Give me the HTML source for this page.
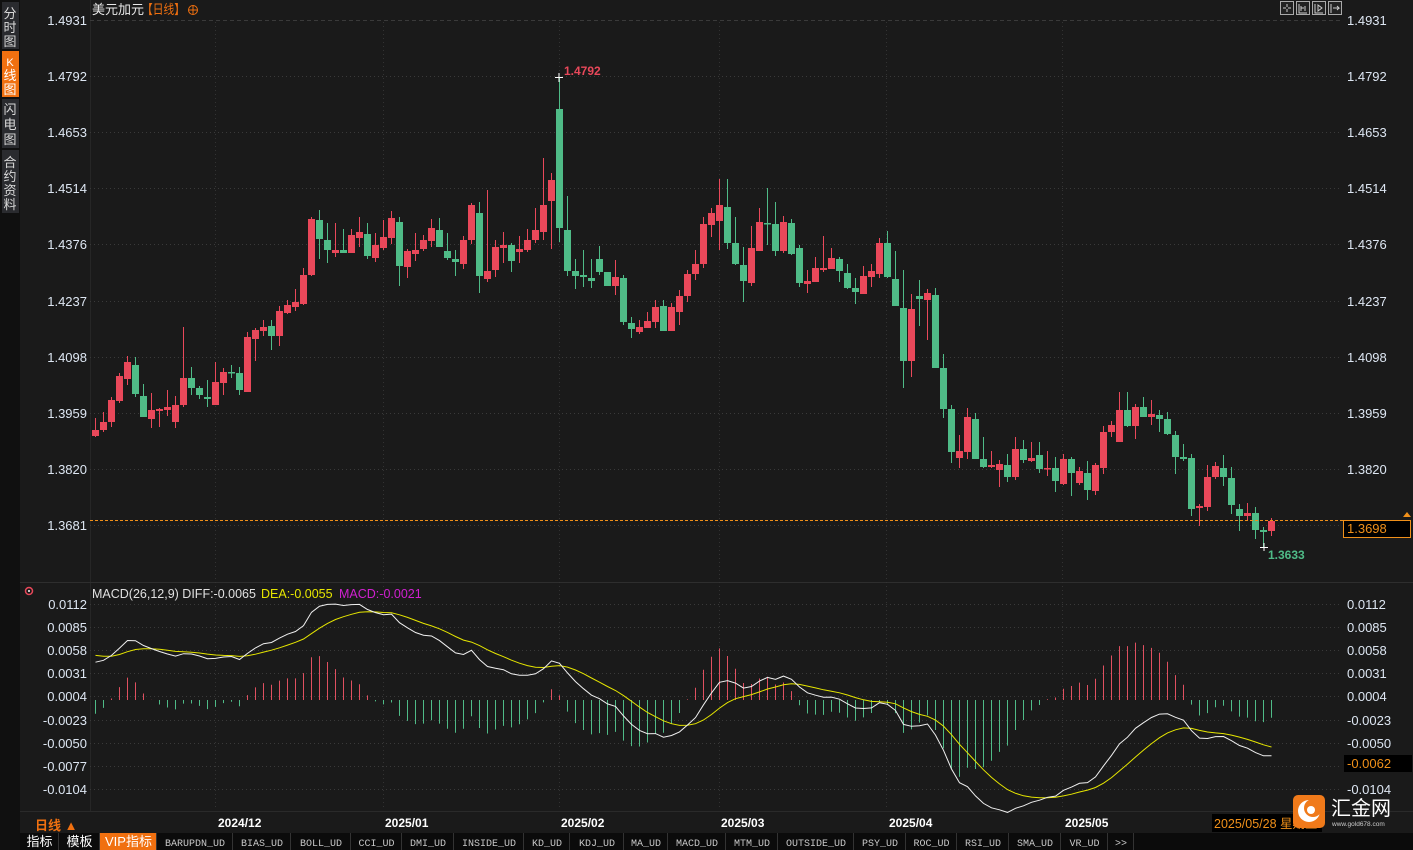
<!DOCTYPE html>
<html><head><meta charset="utf-8">
<style>
html,body{margin:0;padding:0;background:#1a1a1a;width:1413px;height:850px;overflow:hidden;font-family:"Liberation Sans","Noto Sans CJK SC",sans-serif}
svg{position:absolute;left:0;top:0}
</style></head>
<body>
<svg id="s" width="1413" height="850" xmlns="http://www.w3.org/2000/svg" font-family="Liberation Sans, Noto Sans CJK SC, sans-serif">
<rect x="0" y="0" width="1413" height="850" fill="#1a1a1a"/>
<rect x="0" y="0" width="20" height="850" fill="#101010"/>
<rect x="2" y="2" width="17" height="47" fill="#2a2b2f"/>
<rect x="2" y="51" width="17" height="46" fill="#f07010"/>
<rect x="2" y="99" width="17" height="49" fill="#2a2b2f"/>
<rect x="2" y="150" width="17" height="63" fill="#2a2b2f"/>
<g font-size="13" fill="#d8d8d8" text-anchor="middle">
<text x="10" y="18">分</text><text x="10" y="32">时</text><text x="10" y="46">图</text>
<text x="10" y="66" fill="#fff" font-size="11">K</text><text x="10" y="80" fill="#fff">线</text><text x="10" y="94" fill="#fff">图</text>
<text x="10" y="114">闪</text><text x="10" y="129">电</text><text x="10" y="144">图</text>
<text x="10" y="167">合</text><text x="10" y="181">约</text><text x="10" y="195">资</text><text x="10" y="209">料</text>
</g>
<line x1="90.5" y1="0" x2="90.5" y2="812" stroke="#262626"/>
<line x1="20" y1="582.5" x2="1413" y2="582.5" stroke="#2e2e2e"/>
<line x1="20" y1="811.5" x2="1413" y2="811.5" stroke="#2a2a2a"/>
<g id="grid" stroke="#3a3a3a" stroke-dasharray="1,3"></g>
<line x1="90" y1="20.5" x2="1340" y2="20.5" stroke="#3a3a3a" stroke-dasharray="4,3"/>
<g id="vgrid" stroke="#333" stroke-dasharray="1,3"></g>
<g id="candles"></g>
<g id="macd"></g>
<text x="92" y="14" font-size="13" fill="#e8e8e8">美元加元</text>
<text x="142" y="14" font-size="13" fill="#f07010" textLength="43" lengthAdjust="spacingAndGlyphs">【日线】</text>
<circle cx="193" cy="10" r="4.5" fill="none" stroke="#f07010"/><line x1="188.5" y1="10" x2="197.5" y2="10" stroke="#f07010"/><line x1="193" y1="5.5" x2="193" y2="14.5" stroke="#f07010"/>
<g fill="#222" stroke="#aaa">
<rect x="1280.5" y="1.5" width="13" height="13"/><rect x="1296.5" y="1.5" width="13" height="13"/><rect x="1312.5" y="1.5" width="13" height="13"/><rect x="1328.5" y="1.5" width="13" height="13"/>
</g>
<g stroke="#ccc" fill="none">
<path d="M1287 4v3M1287 9v3M1283 8h3M1288 8h3"/>
<path d="M1299 4v9h8M1301 6v5M1305 6v5M1301 8l3 0"/>
<path d="M1315 4v9h8M1318 5l4 3l-4 3z"/>
<path d="M1331 4v9M1333 8h6l-2-2M1337 10l2-2"/>
</g>
<g id="labels" font-size="13" fill="#dde6f2"></g>
<text x="564" y="75" font-size="12" fill="#e8485a" font-weight="bold">1.4792</text>
<path d="M555 77.5h8M559 73v9" stroke="#fff"/>
<text x="1268" y="559" font-size="12" fill="#4fbb87" font-weight="bold">1.3633</text>
<path d="M1260 547.5h8M1264 543v8" stroke="#fff"/>
<line x1="90" y1="520.5" x2="1402" y2="520.5" stroke="#f0901a" stroke-dasharray="3,2"/>
<path d="M1403 517l4-5l4 5z" fill="#f0901a"/>
<rect x="1343.5" y="520.5" width="67" height="17" fill="#000" stroke="#f0901a"/>
<text x="1347" y="533" font-size="13" fill="#f0901a">1.3698</text>
<circle cx="29" cy="591" r="3.5" fill="none" stroke="#e8485a" stroke-width="1.5"/><circle cx="29" cy="591" r="1" fill="#fff"/>
<text x="92" y="598" font-size="12.5" fill="#e0e0e0">MACD(26,12,9) DIFF:-0.0065 <tspan x="261" fill="#e6e600">DEA:-0.0055</tspan><tspan x="339" fill="#d020d0">MACD:-0.0021</tspan></text>
<rect x="1344" y="755" width="68" height="17" fill="#000"/>
<text x="1347" y="768" font-size="13" fill="#f0901a">-0.0062</text>
<text x="35" y="830" font-size="13" fill="#f07010" font-weight="bold">日线 ▲</text>
<g font-size="12" fill="#fff" font-weight="bold">
<text x="218" y="827">2024/12</text><text x="385" y="827">2025/01</text><text x="561" y="827">2025/02</text>
<text x="721" y="827">2025/03</text><text x="889" y="827">2025/04</text><text x="1065" y="827">2025/05</text>
</g>
<rect x="1212" y="814" width="110" height="18" fill="#000"/>
<text x="1214" y="828" font-size="12.5" fill="#f0901a">2025/05/28 星期三</text>
<rect x="1293" y="795" width="32" height="33" rx="5" fill="#f07a1a"/>
<circle cx="1309" cy="811" r="11" fill="#fff"/>
<circle cx="1313" cy="808" r="9" fill="#f07a1a"/>
<circle cx="1311" cy="810" r="4" fill="#fff"/>
<text x="1331" y="815" font-size="20" fill="#fff">汇金网</text>
<text x="1332" y="826" font-size="6.5" fill="#ccc">www.gold678.com</text>
<rect x="20" y="833" width="1393" height="17" fill="#0b0b0b"/>
<g id="tabs"></g>
</svg>
<script>
(function(){
var NS="http://www.w3.org/2000/svg";
function el(p,t,a,txt){var e=document.createElementNS(NS,t);for(var k in a)e.setAttribute(k,a[k]);if(txt!=null)e.textContent=txt;p.appendChild(e);return e;}
var g=document.getElementById('grid'),lab=document.getElementById('labels');
var mainY=[[1.4931,20],[1.4792,76],[1.4653,132],[1.4514,188],[1.4376,244],[1.4237,301],[1.4098,357],[1.3959,413],[1.3820,469],[1.3681,525]];
mainY.forEach(function(a,i){if(i>0)el(g,'line',{x1:90,y1:a[1]+.5,x2:1340,y2:a[1]+.5});
 el(lab,'text',{x:87,y:a[1]+5,'text-anchor':'end'},a[0].toFixed(4));
 if(i<9)el(lab,'text',{x:1347,y:a[1]+5},a[0].toFixed(4));});
var mY=[['0.0112',604],['0.0085',627],['0.0058',650],['0.0031',673],['0.0004',696],['-0.0023',720],['-0.0050',743],['-0.0077',766],['-0.0104',789]];
mY.forEach(function(a){el(g,'line',{x1:90,y1:a[1]+.5,x2:1340,y2:a[1]+.5});
 el(lab,'text',{x:87,y:a[1]+5,'text-anchor':'end'},a[0]);
 if(a[0]!='-0.0077')el(lab,'text',{x:1347,y:a[1]+5},a[0]);});
var vg=document.getElementById('vgrid');
[215,383,559,719,886,1062].forEach(function(x){el(vg,'line',{x1:x+.5,y1:22,x2:x+.5,y2:810});});
var D="r 430 436 418 437|r 422 430 412 432|r 400 422 397 427|r 376 401 373 403|r 362 379 356 385|g 365 394 357 397|g 396 417 384 417|r 410 419 393 428|r 409 411 408 427|r 407 410 390 416|r 405 422 396 428|r 378 405 327 407|g 378 388 367 395|g 388 395 386 399|g 397 399 380 407|r 382 405 362 405|r 372 383 368 395|g 372 373 365 378|g 373 390 367 395|r 337 392 332 392|r 330 339 328 361|r 327 331 320 336|g 326 336 320 350|r 311 336 306 346|r 305 313 300 314|r 302 307 289 311|r 275 304 268 305|r 219 275 217 276|g 220 239 210 259|g 240 250 223 263|r 250 253 223 257|g 250 253 229 253|r 235 253 229 253|r 232 238 217 247|g 234 256 223 259|r 245 258 233 262|r 237 248 220 250|r 218 238 211 244|g 222 266 217 286|r 251 267 249 278|r 250 254 233 261|r 240 249 235 251|r 228 241 219 247|g 230 247 218 247|g 251 258 233 260|g 259 262 250 276|r 240 264 236 269|r 205 240 203 244|g 213 276 202 293|r 271 279 190 282|r 247 270 240 277|r 245 248 232 263|g 245 261 243 272|r 249 252 236 263|r 240 250 229 252|r 230 240 208 243|r 205 232 158 240|r 180 201 173 249|g 109 228 77 242|g 230 271 196 276|g 271 276 259 289|g 275 277 250 287|g 278 281 259 288|g 259 272 246 275|g 272 286 272 286|r 277 286 260 295|g 278 322 275 325|g 323 329 317 338|r 327 332 320 334|r 321 328 312 328|r 307 322 300 328|g 306 331 300 331|r 307 331 303 331|r 296 312 290 325|r 274 296 270 302|r 264 274 250 280|r 224 264 217 268|r 213 225 208 237|r 205 221 179 250|g 207 243 179 249|g 243 264 217 265|g 265 281 247 302|r 248 283 226 286|r 222 251 208 251|g 223 224 188 245|g 224 251 202 256|r 222 251 216 253|g 223 254 219 255|g 248 283 245 287|r 281 284 270 293|r 268 282 257 282|r 268 270 236 272|r 258 269 248 269|g 259 271 257 282|g 273 288 264 289|g 288 292 278 304|r 276 294 266 294|r 271 277 264 287|r 243 274 238 278|g 243 277 231 278|g 279 306 251 306|g 308 361 270 388|r 309 361 294 377|g 296 299 280 326|r 293 300 289 340|g 295 368 288 368|g 368 409 354 418|g 409 452 405 463|r 451 458 435 468|r 417 452 408 459|g 419 459 413 459|g 459 467 437 468|r 465 467 451 468|r 464 470 460 487|g 465 477 454 482|r 449 477 437 480|g 449 460 440 463|r 458 461 442 462|g 455 469 442 473|r 468 469 451 476|g 468 481 457 492|r 459 484 454 485|g 459 473 457 496|r 471 483 467 485|g 473 490 461 500|r 465 491 463 495|r 432 468 426 474|r 425 432 421 437|r 410 442 392 442|g 410 426 392 427|r 407 426 404 439|g 407 417 397 417|r 414 417 400 425|g 415 419 410 432|g 419 434 412 435|g 435 457 431 474|g 457 459 444 461|g 458 509 454 516|r 506 508 504 526|r 477 507 465 511|r 466 477 462 479|g 468 477 455 486|g 478 505 467 514|g 509 516 504 531|r 513 516 503 520|g 513 530 507 539|g 530 532 527 547|r 521 531 518 536";
var RC="#e9485a",GC="#4fbb87";
var cg=document.getElementById('candles'),mg=document.getElementById('macd');
var closes=[];
D.split('|').forEach(function(s,i){var a=s.split(' ');var c=a[0]=='r'?RC:GC;var t=+a[1],b=+a[2],wt=+a[3],wb=+a[4];
 var x=95+8*i;
 el(cg,'rect',{x:x,y:wt,width:1,height:Math.max(1,wb-wt),fill:c});
 el(cg,'rect',{x:x-3,y:t,width:7,height:Math.max(1.5,b-t),fill:c});
 var cy=a[0]=='r'?t:b; closes.push(1.4931-(cy-20)*0.0139/56.15);});
var e12=closes[0]-0.0050,e26=closes[0]-0.0094,dea=0.0052;
var k12=2/13,k26=2/27,k9=2/10;
var dp=[],ep=[];
function Y(v){return 700-v*8583;}
closes.forEach(function(c,i){
 if(i>0){e12=e12+(c-e12)*k12;e26=e26+(c-e26)*k26;}
 var diff=e12-e26; if(i>0)dea=dea+(diff-dea)*k9;
 var h=2*(diff-dea); var x=95+8*i+.5;
 el(mg,'line',{x1:x,y1:700,x2:x,y2:Y(h),stroke:h>=0?'#e05060':'#4fbb87','stroke-width':1});
 dp.push(x+','+Y(diff).toFixed(1));ep.push(x+','+Y(dea).toFixed(1));});
el(mg,'polyline',{points:ep.join(' '),fill:'none',stroke:'#e6e600','stroke-width':1});
el(mg,'polyline',{points:dp.join(' '),fill:'none',stroke:'#f0f0f0','stroke-width':1});
var tg=document.getElementById('tabs');
var tabs=[['指标',20,59],['模板',59,100],['VIP指标',100,157],['BARUPDN_UD',157,233],['BIAS_UD',233,291],['BOLL_UD',291,351],['CCI_UD',351,402],['DMI_UD',402,454],['INSIDE_UD',454,524],['KD_UD',524,570],['KDJ_UD',570,624],['MA_UD',624,668],['MACD_UD',668,726],['MTM_UD',726,778],['OUTSIDE_UD',778,854],['PSY_UD',854,906],['ROC_UD',906,957],['RSI_UD',957,1009],['SMA_UD',1009,1061],['VR_UD',1061,1108],['>>',1108,1134]];
tabs.forEach(function(t,i){
 if(i==2)el(tg,'rect',{x:t[1],y:833,width:t[2]-t[1],height:17,fill:'#f07010'});
 el(tg,'line',{x1:t[2]-.5,y1:833,x2:t[2]-.5,y2:850,stroke:'#333'});
 el(tg,'text',{x:(t[1]+t[2])/2,y:846,'text-anchor':'middle','font-size':i<3?13:10,fill:i<3?'#fff':'#c8c8c8','font-family':i<3?'Liberation Sans, Noto Sans CJK SC, sans-serif':'Liberation Mono, monospace'},t[0]);
});
})();
</script>
</body></html>
